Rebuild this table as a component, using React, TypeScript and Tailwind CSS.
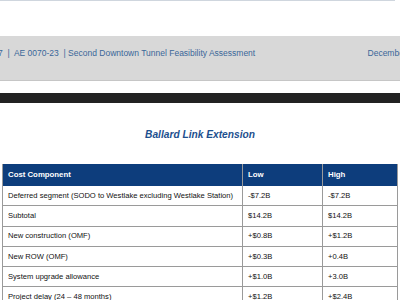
const rows: [string, string, string][] = [
  ['Deferred segment (SODO to Westlake excluding Westlake Station)', '-$7.2B', '-$7.2B'],
  ['Subtotal', '$14.2B', '$14.2B'],
  ['New construction (OMF)', '+$0.8B', '+$1.2B'],
  ['New ROW (OMF)', '+$0.3B', '+0.4B'],
  ['System upgrade allowance', '+$1.0B', '+3.0B'],
  ['Project delay (24 – 48 months)', '+$1.2B', '+$2.4B'],
];

export default function App() {
  return (
    <div className="w-[400px] h-[300px] overflow-hidden bg-white font-['Liberation_Sans',Arial,sans-serif]">
      <div className="h-px mr-[5px] bg-[#cfd6de]" />
      <div className="h-[35px]" />
      <div className="h-[45px] bg-[#d8d8d8] border-b border-[#c6c6c6] flex items-start pt-[11px] text-[8.5px] text-[#3a6799] whitespace-pre">
        <span className="ml-[-2px]">{'7  |  AE 0070-23  | Second Downtown Tunnel Feasibility Assessment'}</span>
        <span className="ml-auto mr-[-28px]">December 2023</span>
      </div>
      <div className="h-[12px]" />
      <div className="h-[10px] bg-[#222222]" />
      <div className="h-[61px] pt-[3px] flex items-center justify-center">
        <h1 className="text-[10.2px] font-bold italic text-[#1d4f8e]">Ballard Link Extension</h1>
      </div>
      <div className="ml-[2px] w-[396px] border-l border-r border-[#9a9a9a] text-[7.6px] text-[#111]">
        <div className="flex h-[22px] bg-[#0d3d7c] text-white font-bold text-[7.8px]">
          <div className="w-[240px] flex items-center pl-[5px] border-r border-[#9a9a9a]">Cost Component</div>
          <div className="w-[80px] flex items-center pl-[5px] border-r border-[#9a9a9a]">Low</div>
          <div className="flex-1 flex items-center pl-[5px]">High</div>
        </div>
        {rows.map(([label, low, high]) => (
          <div key={label} className="flex h-[20.25px] border-b border-[#9a9a9a]">
            <div className="w-[240px] flex items-center pl-[5px] border-r border-[#9a9a9a]">{label}</div>
            <div className="w-[80px] flex items-center pl-[5px] border-r border-[#9a9a9a]">{low}</div>
            <div className="flex-1 flex items-center pl-[5px]">{high}</div>
          </div>
        ))}
      </div>
    </div>
  );
}
